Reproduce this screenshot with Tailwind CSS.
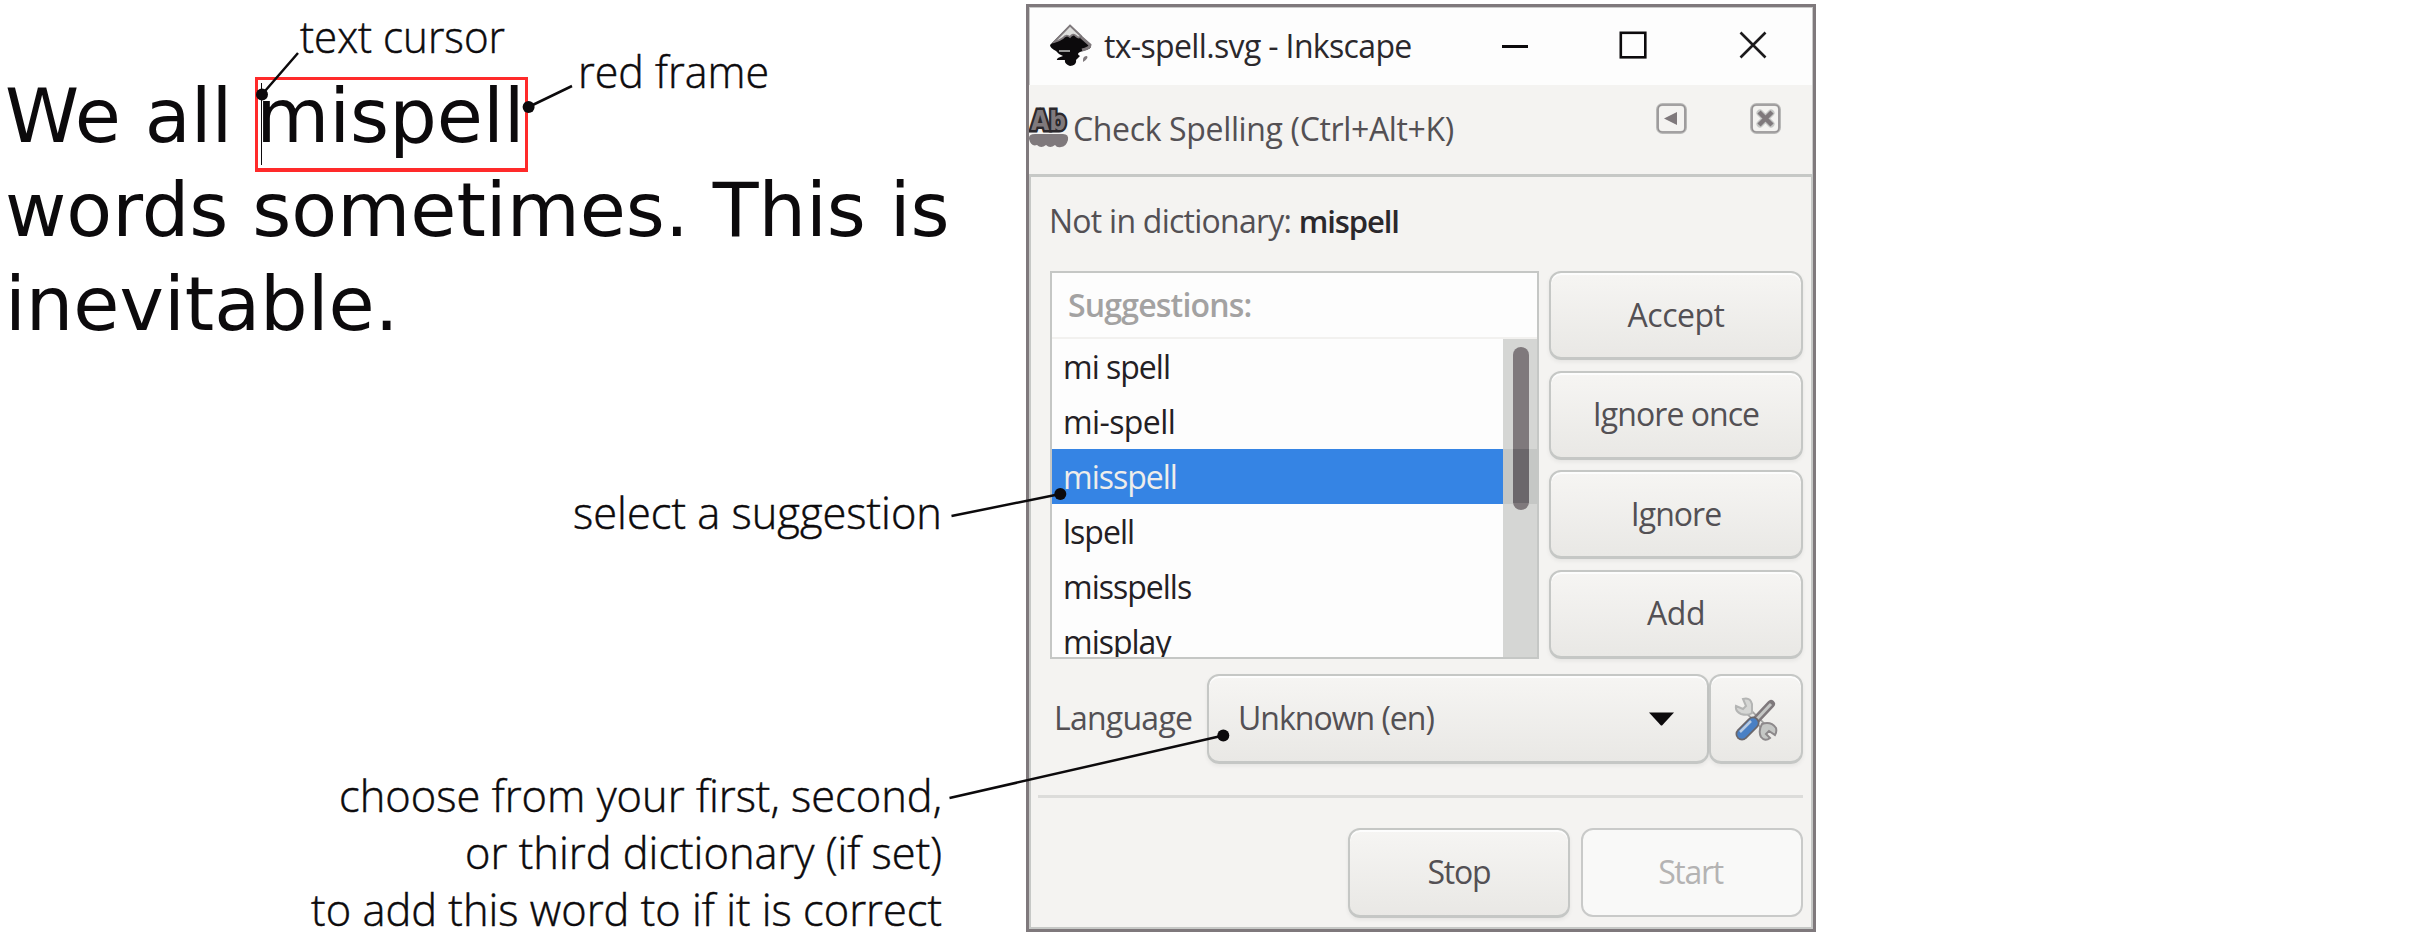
<!DOCTYPE html>
<html lang="en">
<head>
<meta charset="utf-8">
<title>Check Spelling</title>
<script src="https://cdn.jsdelivr.net/npm/@tailwindcss/browser@4"></script>
</head>
<body class="bg-white">
<main class="relative flex h-[938px] w-[2410px] overflow-hidden bg-white">

  <!-- Sample text and notes -->
  <section class="w-[1026px] shrink-0 text-[#0c0a0c]">
    <p class="whitespace-nowrap pl-[5px] pt-[70px] font-['DejaVu_Sans',sans-serif] text-[75px] leading-[93.75px]">We all mispell<br>words sometimes. This is<br>inevitable.</p>
    <div class="mr-[84px] origin-right scale-x-[0.965] whitespace-nowrap text-right font-['Open_Sans',sans-serif] text-[45px] font-light leading-[57.4px] [-webkit-text-stroke:0.5px_#0c0a0c]">
      <p class="mt-[132px]">select a suggestion</p>
      <p class="mt-[225px]">choose from your first, second,<br>or third dictionary (if set)<br>to add this word to if it is correct</p>
    </div>
  </section>

  <!-- Dialog -->
  <section class="mt-[4px] flex h-[928px] w-[790px] shrink-0 flex-col border-[3px] border-[#7f797c] bg-[#f4f3f1] font-['Open_Sans',sans-serif] text-[32px] leading-[44px] text-[#535054]">
    <header class="flex h-[78px] shrink-0 items-center border-x border-t border-[#c9c9c8] bg-[#fdfdfd] pl-[19px] pr-[45px] pb-[3px]">
      <svg class="h-[43px] w-[43px] shrink-0" viewBox="0 0 43 43">
        <path d="M21 1 L41 20 Q44 24 37 26 L31 28 Q27 30 31 32 Q28 35 27 36 Q28 41 21 42 Q15 40 16 36 L8 36 Q7 34 14 32 Q9 30 7 27 Q1 24 1 21 Z" fill="#0c0a0c"/>
        <path d="M21 1.500 L32 12 Q30 15 27 12 Q24 9 21 13 Q17 10 14 14 Q10 17 5 18 Z" fill="#dededc" stroke="#7f797c" stroke-width="1.800"/>
        <path d="M32 13 L41 21 Q41 24 33 26" fill="none" stroke="#7f797c" stroke-width="3"/>
        <path d="M10 27 H21" stroke="#c5c7c5" stroke-width="1.500"/>
        <path d="M34 36 Q34 32 38 32 Q40 34 34 38 Z" fill="#7f797c"/>
      </svg>
      <h1 class="ml-[12px] mt-[2px] whitespace-nowrap tracking-[-0.65px] text-[#2b282c]">tx-spell.svg - Inkscape</h1>
      <div class="ml-auto flex items-center">
        <svg class="h-[28px] w-[28px]" viewBox="0 0 28 28"><path d="M1 15.500 H27" stroke="#0c0a0c" stroke-width="3"/></svg>
        <svg class="ml-[90px] h-[28px] w-[28px]" viewBox="0 0 28 28"><rect x="1.800" y="1.800" width="24.500" height="24.500" fill="none" stroke="#0c0a0c" stroke-width="2.600"/></svg>
        <svg class="ml-[92px] h-[28px] w-[28px]" viewBox="0 0 28 28"><path d="M1.500 1.500 L26.500 26.500 M26.500 1.500 L1.500 26.500" stroke="#1c1a1c" stroke-width="2.600"/></svg>
      </div>
    </header>

    <div class="flex h-[89px] shrink-0 items-start border-r border-[#c9c9c8] pr-[31px]">
      <svg class="mt-[22px] h-[42px] w-[40px] shrink-0" viewBox="0 0 40 42">
        <path d="M0 31 Q0 27 6 27 H34 Q40 27 39 33 Q37 40 32 40 Q28 41 26 38 Q21 42 17 38 Q12 42 8 38 Q2 40 0 32Z" fill="#7f797c"/>
        <text x="2" y="23" textLength="35" lengthAdjust="spacingAndGlyphs" font-family="DejaVu Sans" font-weight="bold" font-size="26" fill="#7f797c" stroke="#2b282c" stroke-width="5" paint-order="stroke">Ab</text>
      </svg>
      <h2 class="ml-[4px] mt-[22px] whitespace-nowrap tracking-[-0.35px]">Check Spelling (Ctrl+Alt+K)</h2>
      <svg class="ml-auto mt-[18px] h-[31px] w-[31px]" viewBox="0 0 31 31">
        <rect x="1.500" y="1.500" width="28" height="28" rx="5" fill="#f4f3f1" stroke="#b9b9b8" stroke-width="3"/><rect x="2" y="2" width="27" height="27" rx="4" fill="none" stroke="#8d898b" stroke-width="1.200"/>
        <path d="M8 15.500 L21 9 V22 Z" fill="#7f797c"/>
      </svg>
      <svg class="ml-[63px] mt-[18px] h-[31px] w-[31px]" viewBox="0 0 31 31">
        <rect x="1.500" y="1.500" width="28" height="28" rx="5" fill="#f4f3f1" stroke="#b9b9b8" stroke-width="3"/><rect x="2" y="2" width="27" height="27" rx="4" fill="none" stroke="#8d898b" stroke-width="1.200"/>
        <path d="M10 10 L21 21 M21 10 L10 21" stroke="#c5c7c5" stroke-width="7" stroke-linecap="round"/><path d="M9 9 L22 22 M22 9 L9 22" stroke="#7f797c" stroke-width="4.500"/>
      </svg>
    </div>

    <div class="flex grow flex-col border-x-2 border-b-2 border-t-[3px] border-[#c6c8c6]">
      <p class="flex h-[94px] shrink-0 items-center whitespace-pre pb-[7px] pl-[18px] tracking-[-0.75px]"><span>Not in dictionary: </span><strong class="text-[31px] font-semibold tracking-[-1.1px] text-[#2b282c]">mispell</strong></p>

      <div class="ml-[19px] flex h-[388px] shrink-0 gap-[10px]">
        <div class="flex h-[388px] w-[489px] flex-col overflow-hidden border-2 border-[#c5c7c5] bg-[#fdfdfd]">
          <div class="flex h-[66px] shrink-0 items-center border-b-2 border-[#f2f1ef] pb-[1px] pl-[16px] font-semibold tracking-[-0.8px] text-[#a3a2a2]">Suggestions:</div>
          <div class="flex h-[318px] overflow-hidden">
            <ul class="w-[451px] shrink-0 tracking-[-1px] text-[#232024] [&>li]:flex [&>li]:h-[55px] [&>li]:items-center [&>li]:pl-[11px]">
              <li>mi spell</li>
              <li class="tracking-[-0.6px]">mi-spell</li>
              <li class="bg-[#3584e4] text-[#eeedeb]">misspell</li>
              <li>lspell</li>
              <li>misspells</li>
              <li>misplay</li>
            </ul>
            <div class="relative w-[34px] bg-[#d5d6d4]">
              <div class="mt-[110px] h-[55px] bg-[#c5c7c5]"></div>
              <div class="absolute left-[10px] top-[8px] h-[163px] w-[16px] overflow-hidden rounded-full bg-[#7f797c]"><div class="mt-[102px] h-[54px] bg-[#6b676b]"></div></div>
            </div>
          </div>
        </div>
        <div class="flex w-[254px] flex-col justify-between [&>button]:h-[89px] [&>button]:rounded-[12px] [&>button]:border-2 [&>button]:border-b-[3px] [&>button]:border-[#c5c7c5] [&>button]:bg-linear-to-b [&>button]:from-[#f6f5f3] [&>button]:to-[#e9e8e5] [&>button]:pb-[1px] [&>button]:shadow-[0_2px_4px_rgba(0,0,0,0.06),inset_0_2px_0_#fdfdfd]">
          <button class="tracking-[-0.5px]">Accept</button>
          <button class="tracking-[-0.95px]">Ignore once</button>
          <button class="tracking-[-0.95px]">Ignore</button>
          <button class="tracking-[-0.4px]">Add</button>
        </div>
      </div>

      <div class="mt-[15px] flex h-[90px] shrink-0 items-center">
        <span class="w-[176px] pb-[2px] pl-[23px] tracking-[-0.75px]">Language</span>
        <button class="flex h-[90px] w-[502px] items-center justify-between rounded-[12px] border-2 border-b-[3px] border-[#c5c7c5] bg-linear-to-b from-[#f6f5f3] to-[#e9e8e5] pb-[2px] pl-[29px] pr-[33px] shadow-[0_2px_4px_rgba(0,0,0,0.06),inset_0_2px_0_#fdfdfd]">
          <span class="tracking-[-1px]">Unknown (en)</span>
          <svg class="mt-[2px] h-[14px] w-[25px]" viewBox="0 0 25 14"><path d="M0 0.500 H25 L13.500 13 Q12.500 14 11.500 13 Z" fill="#0c0a0c"/></svg>
        </button>
        <button class="flex h-[90px] w-[94px] items-center justify-center rounded-[12px] border-2 border-b-[3px] border-[#c5c7c5] bg-linear-to-b from-[#f6f5f3] to-[#e9e8e5] shadow-[0_2px_4px_rgba(0,0,0,0.06),inset_0_2px_0_#fdfdfd]">
          <svg class="h-[44px] w-[44px]" viewBox="0 0 44 44">
            <path d="M12 12 L33 33" stroke="#a3a2a2" stroke-width="7"/>
            <path d="M12 12 L33 33" stroke="#e6e6e4" stroke-width="3.500"/>
            <path d="M9 2 Q16 0 18 7 L18 16 Q14 19 7 17 Q1 14 2 9 L9 12 L12 9 Z" fill="#d5d6d4" stroke="#b4b5b4" stroke-width="2"/>
            <path d="M28 27 Q37 24 42 31 Q43 35 41 38 L35 34 L32 37 L36 41 Q31 45 27 40 Q24 34 28 27 Z" fill="#c5c7c5" stroke="#8d898b" stroke-width="2"/>
            <path d="M21 24 L37 7" stroke="#7f797c" stroke-width="8" stroke-linecap="round"/>
            <path d="M21 24 L37 7" stroke="#c5c7c5" stroke-width="3"/>
            <path d="M19 26 L8 37" stroke="#6b676b" stroke-width="13" stroke-linecap="round"/>
            <path d="M19 26 L8 37" stroke="#4a80c4" stroke-width="9.500" stroke-linecap="round"/>
            <path d="M17 24 L6 35" stroke="#b9cbe2" stroke-width="2.500"/>
          </svg>
        </button>
      </div>

      <hr class="ml-[7px] mr-[8px] mt-[31px] h-[3px] shrink-0 border-0 bg-[#dcdcda]">

      <div class="mr-[8px] mt-[30px] flex shrink-0 justify-end gap-[11px]">
        <button class="h-[90px] w-[222px] rounded-[12px] border-2 border-b-[3px] border-[#c5c7c5] bg-linear-to-b from-[#f6f5f3] to-[#e9e8e5] pb-[2px] tracking-[-1.2px] shadow-[0_2px_4px_rgba(0,0,0,0.06),inset_0_2px_0_#fdfdfd]">Stop</button>
        <button class="h-[89px] w-[222px] rounded-[12px] border-2 border-[#c9cac9] bg-[#f9f9f8] pb-[1px] pr-[3px] tracking-[-1.3px] text-[#b4b3b3]">Start</button>
      </div>
    </div>
  </section>

  <!-- Marks and callouts laid over the sample and the dialog -->
  <div class="absolute left-[255px] top-[77px] h-[95px] w-[273px] border-[3px] border-b-4 border-[#ff2a2a]"></div>
  <div class="absolute left-[261px] top-[83px] h-[82px] w-px bg-[#0c0a0c]"></div>
  <span class="absolute left-[300px] top-[7px] origin-left scale-x-[0.935] whitespace-nowrap font-['Open_Sans',sans-serif] text-[45px] font-light leading-[57.4px] text-[#0c0a0c] [-webkit-text-stroke:0.5px_#0c0a0c]">text cursor</span>
  <span class="absolute left-[578px] top-[42px] origin-left scale-x-[0.955] whitespace-nowrap font-['Open_Sans',sans-serif] text-[45px] font-light leading-[57.4px] text-[#0c0a0c] [-webkit-text-stroke:0.5px_#0c0a0c]">red frame</span>
  <svg class="pointer-events-none absolute left-0 top-0 h-[938px] w-[2410px]" viewBox="0 0 2410 938" fill="#0c0a0c" stroke="#0c0a0c" stroke-width="2.500">
    <path d="M262 94.500 L298 53 M528.500 107 L572 86 M1060.300 494 L951.500 516 M1223.300 735.500 L949.500 798"/>
    <g stroke="none"><circle cx="262" cy="94.500" r="6"/><circle cx="528.600" cy="107" r="6"/><circle cx="1060.300" cy="494" r="6"/><circle cx="1223.300" cy="735.500" r="6"/></g>
  </svg>
</main>
</body>
</html>
